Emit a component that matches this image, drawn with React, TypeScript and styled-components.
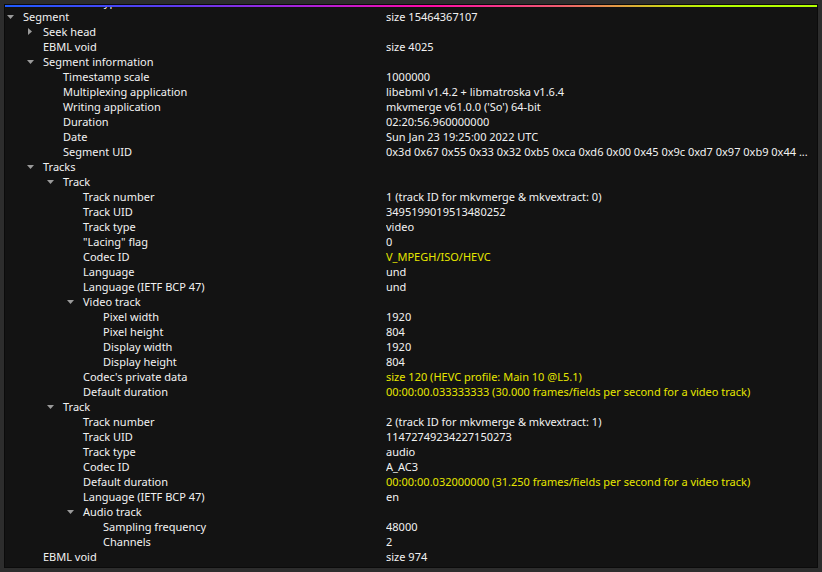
import styled, { createGlobalStyle } from 'styled-components';

const GlobalStyle = createGlobalStyle`
  html, body {
    margin: 0;
    padding: 0;
    background: #2d2d2d;
  }
  body {
    font-family: 'Noto Sans', 'Open Sans', sans-serif;
    font-size: 11px;
  }
`;

type Node = {
  name: string;
  value?: string;
  level: number;
  toggle?: 'open' | 'closed';
  accent?: boolean;
};

const ROWS: Node[] = [
  { name: 'Document type read version', value: '2', level: 1 },
  { name: 'Segment', value: 'size 15464367107', level: 0, toggle: 'open' },
  { name: 'Seek head', level: 1, toggle: 'closed' },
  { name: 'EBML void', value: 'size 4025', level: 1 },
  { name: 'Segment information', level: 1, toggle: 'open' },
  { name: 'Timestamp scale', value: '1000000', level: 2 },
  { name: 'Multiplexing application', value: 'libebml v1.4.2 + libmatroska v1.6.4', level: 2 },
  { name: 'Writing application', value: "mkvmerge v61.0.0 ('So') 64-bit", level: 2 },
  { name: 'Duration', value: '02:20:56.960000000', level: 2 },
  { name: 'Date', value: 'Sun Jan 23 19:25:00 2022 UTC', level: 2 },
  {
    name: 'Segment UID',
    value: '0x3d 0x67 0x55 0x33 0x32 0xb5 0xca 0xd6 0x00 0x45 0x9c 0xd7 0x97 0xb9 0x44 ...',
    level: 2,
  },
  { name: 'Tracks', level: 1, toggle: 'open' },
  { name: 'Track', level: 2, toggle: 'open' },
  { name: 'Track number', value: '1 (track ID for mkvmerge & mkvextract: 0)', level: 3 },
  { name: 'Track UID', value: '3495199019513480252', level: 3 },
  { name: 'Track type', value: 'video', level: 3 },
  { name: '"Lacing" flag', value: '0', level: 3 },
  { name: 'Codec ID', value: 'V_MPEGH/ISO/HEVC', level: 3, accent: true },
  { name: 'Language', value: 'und', level: 3 },
  { name: 'Language (IETF BCP 47)', value: 'und', level: 3 },
  { name: 'Video track', level: 3, toggle: 'open' },
  { name: 'Pixel width', value: '1920', level: 4 },
  { name: 'Pixel height', value: '804', level: 4 },
  { name: 'Display width', value: '1920', level: 4 },
  { name: 'Display height', value: '804', level: 4 },
  { name: "Codec's private data", value: 'size 120 (HEVC profile: Main 10 @L5.1)', level: 3, accent: true },
  {
    name: 'Default duration',
    value: '00:00:00.033333333 (30.000 frames/fields per second for a video track)',
    level: 3,
    accent: true,
  },
  { name: 'Track', level: 2, toggle: 'open' },
  { name: 'Track number', value: '2 (track ID for mkvmerge & mkvextract: 1)', level: 3 },
  { name: 'Track UID', value: '11472749234227150273', level: 3 },
  { name: 'Track type', value: 'audio', level: 3 },
  { name: 'Codec ID', value: 'A_AC3', level: 3 },
  {
    name: 'Default duration',
    value: '00:00:00.032000000 (31.250 frames/fields per second for a video track)',
    level: 3,
    accent: true,
  },
  { name: 'Language (IETF BCP 47)', value: 'en', level: 3 },
  { name: 'Audio track', level: 3, toggle: 'open' },
  { name: 'Sampling frequency', value: '48000', level: 4 },
  { name: 'Channels', value: '2', level: 4 },
  { name: 'EBML void', value: 'size 974', level: 1 },
];

const Window = styled.div`
  margin: 4px;
  height: 562px;
  border: 1px solid #0b0b0b;
  background: #131313;
  display: flex;
  flex-direction: column;
  overflow: hidden;
`;

const AccentBar = styled.div`
  flex: none;
  height: 2px;
  background: linear-gradient(
    90deg,
    #1f5bff 0%,
    #5a3cf0 20%,
    #b020d8 38%,
    #ff0aa8 52%,
    #f05a70 68%,
    #e0a040 76%,
    #c8dc10 82%,
    #b4ff00 88%,
    #b4ff00 100%
  );
`;

const TreeView = styled.div`
  flex: 1;
  overflow: hidden;
`;

// scrolled down a little: the last EBML head row peeks out under the bar
const TreeList = styled.ul`
  list-style: none;
  margin: -13px 0 0;
  padding: 0;
`;

const Row = styled.li`
  display: grid;
  grid-template-columns: 381px 1fr;
  height: 15px;
  line-height: 15px;
  color: #f2f2f2;
  white-space: nowrap;
`;

const NameCell = styled.div<{ $level: number }>`
  display: flex;
  align-items: center;
  padding-left: ${(p) => p.$level * 20}px;
`;

const Toggle = styled.span`
  width: 10px;
  height: 15px;
  margin-right: 8px;
  display: flex;
  align-items: center;
  justify-content: center;
  flex: none;
`;

const Value = styled.div<{ $accent?: boolean }>`
  color: ${(p) => (p.$accent ? '#e6e600' : '#f2f2f2')};
  overflow: hidden;
`;

const Arrow = ({ open }: { open: boolean }) =>
  open ? (
    <svg width="7" height="4" viewBox="0 0 7 4">
      <path d="M0 0 H7 L3.5 4 Z" fill="#9a9a9a" />
    </svg>
  ) : (
    <svg width="4" height="7" viewBox="0 0 4 7">
      <path d="M0 0 V7 L4 3.5 Z" fill="#9a9a9a" />
    </svg>
  );

export default function App() {
  return (
    <>
      <GlobalStyle />
      <Window>
        <AccentBar />
        <TreeView>
          <TreeList>
            {ROWS.map((row, i) => (
              <Row key={i}>
                <NameCell $level={row.level}>
                  <Toggle>{row.toggle && <Arrow open={row.toggle === 'open'} />}</Toggle>
                  {row.name}
                </NameCell>
                <Value $accent={row.accent}>{row.value}</Value>
              </Row>
            ))}
          </TreeList>
        </TreeView>
      </Window>
    </>
  );
}
